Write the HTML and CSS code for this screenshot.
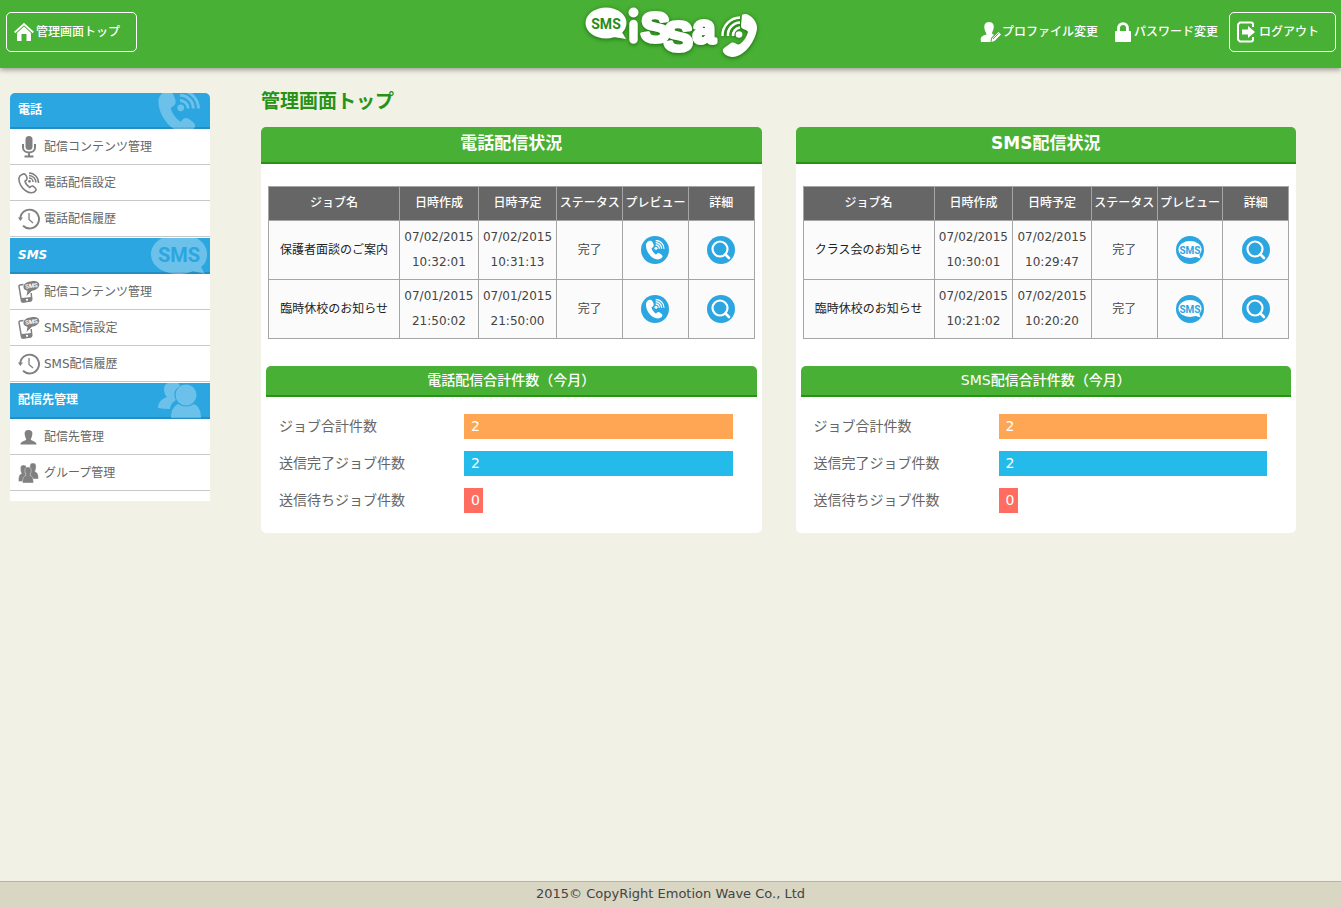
FILE: index.html
```html
<!DOCTYPE html>
<html lang="ja">
<head>
<meta charset="utf-8">
<title>管理画面トップ</title>
<link rel="stylesheet" href="styles.css">
</head>
<body>
<svg class="sprite" aria-hidden="true">
  <symbol id="handset" viewBox="0 0 30 30">
    <path fill="currentColor" d="M6 1.500C9.500 0 12 3 13 7.500C13.500 10.500 11.500 11.500 9.800 12.500C10.500 16.500 13 19.500 16.500 22C18 20 19.500 18.800 21.500 19.800C24 21.500 27.500 23.500 25.800 26C23 30 17 30 12 27C5 22 1 14 1.500 7C2 4.500 3.500 2.500 6 1.500Z"/>
    <circle cx="16.500" cy="12.500" r="2.300" fill="currentColor"/>
    <path fill="none" stroke="currentColor" stroke-width="2" d="M16 7.500A5.500 5.500 0 0 1 21.500 13M16 4A9 9 0 0 1 25 13M16 .800A12.400 12.400 0 0 1 28.500 13"/>
  </symbol>
  <symbol id="handset-line" viewBox="0 0 22 22">
    <path fill="none" stroke="currentColor" stroke-width="1.600" d="M4.500 2.200C7 1 8.500 3.500 9 6C9.300 7.800 8 8.500 7 9.200C7.500 12 9.500 14 11.800 15.500C12.800 14.300 14 13.500 15.300 14.300C17 15.500 19 16.700 17.800 18.500C15.800 21.500 11.500 21.300 8 19C3.500 16 .500 10.500 1 5.800C1.300 4 2.800 2.900 4.500 2.200Z"/>
    <circle cx="11.500" cy="9.300" r="1.400" fill="currentColor"/>
    <path fill="none" stroke="currentColor" stroke-width="1.500" d="M11 6A4 4 0 0 1 15 10M11 3.400A7 7 0 0 1 17.800 10.500M11 .900A9.700 9.700 0 0 1 20.500 11"/>
  </symbol>
  <symbol id="mic" viewBox="0 0 22 22">
    <rect x="7.500" y="0" width="7" height="14" rx="3.500" fill="currentColor"/>
    <path fill="none" stroke="currentColor" stroke-width="2" d="M5 8V11.500C5 18 17 18 17 11.500V8M11 16V20M6.500 20.500H15.500"/>
  </symbol>
  <symbol id="history" viewBox="0 0 22 22">
    <path fill="none" stroke="currentColor" stroke-width="1.900" d="M2.200 11A9.400 9.400 0 1 1 5 17.800"/>
    <path fill="currentColor" d="M0 9.500H5L2.300 13Z"/>
    <path fill="none" stroke="currentColor" stroke-width="1.300" d="M11 5V11.500L15 15"/>
  </symbol>
  <symbol id="mobile" viewBox="0 0 22 22">
    <path fill="none" stroke="currentColor" stroke-width="1.500" d="M5.500 3.500L2 4Q.800 4.300 1 5.500L3.500 20Q4 21.300 5 21L12.500 20Q14 19.500 13.700 18L13.200 12"/>
    <path fill="currentColor" d="M3.500 17L13.500 16L14 20L4.500 21.700Z"/>
    <path fill="currentColor" d="M13.500 .200C18 -.500 21.500 1 21.300 4C21 7.500 17 9.500 14 9.800L8.500 15L9.500 9.800C7 9.500 5.200 8 5.500 5.500C6 2 9.500 .600 13.500 .200Z"/>
    <circle cx="9" cy="18.800" r="1.100" fill="#fff"/>
  </symbol>
  <symbol id="person" viewBox="0 0 22 22">
    <path fill="currentColor" d="M10.500 4C13.500 4 14.800 5.500 14.300 8.500C14 11 13 12 12.800 13.500C13.500 15 18 15 18.500 18V18.500H2.500V18C3 15 7.500 15 8.300 13.500C8 12 7 11 6.700 8.500C6.300 5.500 7.500 4 10.500 4Z"/>
  </symbol>
  <symbol id="group" viewBox="0 0 22 22">
    <g fill="currentColor" stroke="#fff" stroke-width=".4">
      <path d="M15 1C17.800 1 18.500 3 18 6C18 8 17 8.500 17 9.500C19 10.500 20.500 11 20.500 17H11V10C13 9.500 12.500 8.500 12 6C11.500 3 12.200 1 15 1Z"/>
      <path d="M5.500 3C8.200 3 9 5 8.500 8C8 10 7.500 10.500 7.500 11.500C9 12.500 9 14 9 19.500H.500C.500 14.500 1 12.500 3.500 11.500C3 10.500 2.800 10 2.500 8C2 5 2.800 3 5.500 3Z"/>
      <path d="M10 5C12.800 5 13.500 7 13 10C12.800 11.500 12 12.500 12 13.500C14.500 14.500 15.500 16 15.500 21H4.500C4.500 16 5.500 14.500 8 13.500C7.800 12.500 7.300 11.500 7 10C6.500 7 7.200 5 10 5Z"/>
    </g>
  </symbol>
  <symbol id="sms-badge" viewBox="0 0 28 28">
    <circle cx="14" cy="14" r="14" fill="#2ca6e0"/>
    <ellipse cx="14" cy="13.500" rx="11.500" ry="8.500" fill="#fff"/>
    <path fill="#fff" d="M17 20L24.500 22.500L22.500 16Z"/>
  </symbol>
  <symbol id="call-badge" viewBox="0 0 28 28">
    <circle cx="14" cy="14" r="14" fill="#2ca6e0"/>
    <svg x="4" y="4" width="20" height="20" color="#fff"><use href="#handset"/></svg>
  </symbol>
  <symbol id="search-badge" viewBox="0 0 28 28">
    <circle cx="14" cy="14" r="14" fill="#2ca6e0"/>
    <circle cx="13" cy="13" r="7.500" fill="none" stroke="#fff" stroke-width="2.200"/>
    <path stroke="#fff" stroke-width="2.600" stroke-linecap="round" d="M18.500 18.500L22 22"/>
  </symbol>
</svg>

<header class="site-header">
  <a class="outline-link home-link" href="#">
    <svg width="20" height="18" viewBox="0 0 20 18"><path fill="#fff" d="M10 3.500L17 10V18H12.500V11H7.500V18H3V10Z"/><path fill="none" stroke="#fff" stroke-width="1.800" d="M.700 9.500L10 1L19.300 9.500"/></svg>
    <span>管理画面トップ</span>
  </a>
  <a class="logo" href="#" aria-label="SMS issa">
    <svg width="182" height="62" viewBox="0 0 182 62">
      <g class="logo-shadow">
        <ellipse cx="26" cy="22" rx="20.500" ry="15.500" fill="#fff"/>
        <path fill="#fff" d="M27 35L46 38L39 26Z"/>
        <circle cx="53.500" cy="11.500" r="5" fill="#fff"/>
        <path stroke="#fff" stroke-width="8.500" stroke-linecap="round" d="M53.500 23V38.500"/>
        <text class="logo-word"><tspan x="61" y="41">S</tspan><tspan x="84" y="50">S</tspan><tspan class="logo-a" x="113" y="42">a</tspan></text>
        <path fill="#fff" d="M162 14C168 10 178 20 177 28C175 42 163 56 153 56C147 56 140 51 144 47L151 42C155 40 157 45 160 43C164 40 167 35 168 31C167 28 160 29 161 24Z"/>
        <circle cx="159" cy="33.500" r="3.300" fill="#fff"/>
        <path fill="none" stroke="#fff" stroke-width="2.500" d="M153 35A8 8 0 0 1 160 26.500M148 35A12.500 12.500 0 0 1 160 21.500M142.500 35A18 18 0 0 1 160 16.500"/>
      </g>
      <text class="logo-sms" x="26" y="28">SMS</text>
    </svg>
  </a>
  <nav class="account-nav" aria-label="アカウント">
    <a class="plain-link" href="#">
      <svg width="22" height="22" viewBox="0 0 22 22"><path fill="#fff" d="M9 1C13 1 14.500 4 13.500 8C13 10 12 11 12 12.500L14 14L11 17L10.500 21H1C0 16 1.500 15 6.500 13.500C6.500 12 5 10.500 4.500 8C3.800 4 5 1 9 1Z"/><path fill="#fff" d="M12 17.500L18.500 11L21 13.500L14.500 20L11.500 21Z"/><path stroke="#48b034" d="M13 18L18.500 12.500"/></svg>
      <span>プロファイル変更</span>
    </a>
    <a class="plain-link lock-link" href="#">
      <svg width="18" height="20" viewBox="0 0 18 20"><rect x="1" y="9" width="16" height="11" rx="1" fill="#fff"/><path fill="none" stroke="#fff" stroke-width="2.800" d="M4.500 10V6.500C4.500 0 13.500 0 13.500 6.500V10"/></svg>
      <span>パスワード変更</span>
    </a>
    <a class="outline-link logout-link" href="#">
      <svg width="20" height="22" viewBox="0 0 20 22"><path fill="none" stroke="#fff" stroke-width="2" d="M17 6V3.500Q17 1.500 15 1.500H4L2 3.500V18.500L4 20.500H15Q17 20.500 17 18.500V16"/><path fill="#fff" d="M6 8.500H12V5L19 11L12 17V13.500H6Z"/></svg>
      <span>ログアウト</span>
    </a>
  </nav>
</header>

<div class="layout">
  <nav class="sidebar" aria-label="メニュー">
    <section class="menu">
      <h2 class="menu-title">電話<svg class="deco deco-phone" width="45" height="37" viewBox="0 2.500 30 25"><use href="#handset" width="30" height="30"/></svg></h2>
      <ul>
        <li><a href="#"><svg><use href="#mic"/></svg>配信コンテンツ管理</a></li>
        <li><a href="#"><svg><use href="#handset-line"/></svg>電話配信設定</a></li>
        <li><a href="#"><svg><use href="#history"/></svg>電話配信履歴</a></li>
      </ul>
    </section>
    <section class="menu">
      <h2 class="menu-title"><em>SMS</em><svg class="deco deco-sms" width="58" height="36" viewBox="0 0 58 36"><path fill="currentColor" d="M28 -4C45 -4 56 5 56 16C56 22 54 26 50 29L54 36L42 33C36 36 30 36 28 36C12 36 0 28 0 16C0 5 12 -4 28 -4Z"/><text x="28" y="24" class="deco-text">SMS</text></svg></h2>
      <ul>
        <li><a href="#"><svg viewBox="0 0 22 22"><use href="#mobile"/><text x="13.500" y="7" class="tiny-sms" transform="rotate(-8 13.500 5)">SMS</text></svg>配信コンテンツ管理</a></li>
        <li><a href="#"><svg viewBox="0 0 22 22"><use href="#mobile"/><text x="13.500" y="7" class="tiny-sms" transform="rotate(-8 13.500 5)">SMS</text></svg>SMS配信設定</a></li>
        <li><a href="#"><svg><use href="#history"/></svg>SMS配信履歴</a></li>
      </ul>
    </section>
    <section class="menu">
      <h2 class="menu-title">配信先管理<svg class="deco" width="46" height="36" viewBox="0 0 46 36"><g fill="currentColor"><path d="M7 6C7 -3 22 -3 23 3C17 6 16 12 19 17C15 20 14 21 13 26Q6 26 1 25C1 19 5 16 10 14Q7 11 7 6Z"/><circle cx="29" cy="12" r="10.500"/><path d="M14 35C14 27 17 23 21 21Q29 26 37 21C42 23 44 28 44 35Z"/></g></svg></h2>
      <ul>
        <li><a href="#"><svg><use href="#person"/></svg>配信先管理</a></li>
        <li><a href="#"><svg><use href="#group"/></svg>グループ管理</a></li>
      </ul>
    </section>
  </nav>

  <main class="content">
    <h1>管理画面トップ</h1>
    <div class="panels">
      <section class="panel">
        <h2 class="panel-title">電話配信状況</h2>
        <table class="jobs">
          <colgroup><col class="c-name"><col class="c-date"><col class="c-date"><col class="c-small"><col class="c-small"><col class="c-small"></colgroup>
          <thead><tr><th scope="col">ジョブ名</th><th scope="col">日時作成</th><th scope="col">日時予定</th><th scope="col">ステータス</th><th scope="col">プレビュー</th><th scope="col">詳細</th></tr></thead>
          <tbody>
            <tr><td class="name">保護者面談のご案内</td><td>07/02/2015<br>10:32:01</td><td>07/02/2015<br>10:31:13</td><td>完了</td>
              <td><a class="badge" href="#" aria-label="プレビュー"><svg><use href="#call-badge"/></svg></a></td><td><a class="badge" href="#" aria-label="詳細"><svg><use href="#search-badge"/></svg></a></td></tr>
            <tr><td class="name">臨時休校のお知らせ</td><td>07/01/2015<br>21:50:02</td><td>07/01/2015<br>21:50:00</td><td>完了</td>
              <td><a class="badge" href="#" aria-label="プレビュー"><svg><use href="#call-badge"/></svg></a></td><td><a class="badge" href="#" aria-label="詳細"><svg><use href="#search-badge"/></svg></a></td></tr>
          </tbody>
        </table>
        <h3 class="totals-title">電話配信合計件数（今月）</h3>
        <dl class="totals">
          <dt>ジョブ合計件数</dt><dd><span class="bar bar-all" style="width:100%">2</span></dd>
          <dt>送信完了ジョブ件数</dt><dd><span class="bar bar-done" style="width:100%">2</span></dd>
          <dt>送信待ちジョブ件数</dt><dd><span class="bar bar-wait" style="width:0%">0</span></dd>
        </dl>
      </section>
      <section class="panel">
        <h2 class="panel-title">SMS配信状況</h2>
        <table class="jobs">
          <colgroup><col class="c-name"><col class="c-date"><col class="c-date"><col class="c-small"><col class="c-small"><col class="c-small"></colgroup>
          <thead><tr><th scope="col">ジョブ名</th><th scope="col">日時作成</th><th scope="col">日時予定</th><th scope="col">ステータス</th><th scope="col">プレビュー</th><th scope="col">詳細</th></tr></thead>
          <tbody>
            <tr><td class="name">クラス会のお知らせ</td><td>07/02/2015<br>10:30:01</td><td>07/02/2015<br>10:29:47</td><td>完了</td>
              <td><a class="badge" href="#" aria-label="プレビュー"><svg viewBox="0 0 28 28"><use href="#sms-badge"/><text x="14" y="18" class="badge-sms">SMS</text></svg></a></td><td><a class="badge" href="#" aria-label="詳細"><svg><use href="#search-badge"/></svg></a></td></tr>
            <tr><td class="name">臨時休校のお知らせ</td><td>07/02/2015<br>10:21:02</td><td>07/02/2015<br>10:20:20</td><td>完了</td>
              <td><a class="badge" href="#" aria-label="プレビュー"><svg viewBox="0 0 28 28"><use href="#sms-badge"/><text x="14" y="18" class="badge-sms">SMS</text></svg></a></td><td><a class="badge" href="#" aria-label="詳細"><svg><use href="#search-badge"/></svg></a></td></tr>
          </tbody>
        </table>
        <h3 class="totals-title">SMS配信合計件数（今月）</h3>
        <dl class="totals">
          <dt>ジョブ合計件数</dt><dd><span class="bar bar-all" style="width:100%">2</span></dd>
          <dt>送信完了ジョブ件数</dt><dd><span class="bar bar-done" style="width:100%">2</span></dd>
          <dt>送信待ちジョブ件数</dt><dd><span class="bar bar-wait" style="width:0%">0</span></dd>
        </dl>
      </section>
    </div>
  </main>
</div>

<footer class="site-footer">2015© CopyRight Emotion Wave Co., Ltd</footer>
</body>
</html>
```

FILE: styles.css
```css
* { box-sizing: border-box; }

body {
  margin: 0;
  min-height: 100vh;
  display: flex;
  flex-direction: column;
  background: #f1f1e5;
  color: #444;
  font-family: "DejaVu Sans", "Noto Sans CJK JP", sans-serif;
  font-size: 12px;
  line-height: 24px;
}

h1, h2, h3, ul, dl, dd { margin: 0; padding: 0; }
ul { list-style: none; }
a { color: inherit; text-decoration: none; }
svg { display: block; flex: none; }
.sprite { position: absolute; width: 0; height: 0; }

/* Header */
.site-header {
  display: grid;
  grid-template-columns: 1fr auto 1fr;
  align-items: center;
  padding: 0 5px 4px 6px;
  height: 68px;
  background: #48b034;
  box-shadow: 0 2px 5px rgba(0, 0, 0, .35);
  color: #fff;
  font-weight: 500;
}
.site-header a { display: flex; align-items: center; white-space: nowrap; }
.outline-link { height: 40px; border: 1px solid #fff; border-radius: 5px; }
.home-link { justify-self: start; padding: 0 16px 0 7px; gap: 2px; }
.logout-link { padding: 0 16px 0 6px; gap: 3px; }
.account-nav { display: flex; justify-self: end; align-items: center; }
.lock-link { margin: 0 11px 0 16px; gap: 2px; }

.logo-shadow { filter: drop-shadow(0 1px 2px #176d0b); }
.logo-word {
  fill: #fff;
  stroke: #fff;
  stroke-width: 4px;
  stroke-linejoin: round;
  font-family: "Liberation Sans", Arial, sans-serif;
  font-size: 43px;
  font-weight: bold;
}
.logo-a { font-size: 40px; }
.logo-sms, .deco-text, .badge-sms, .tiny-sms {
  font-family: "Liberation Sans Narrow", "DejaVu Sans Condensed", Roboto, sans-serif;
  font-weight: bold;
  text-anchor: middle;
}
.logo-sms {
  font-family: Roboto, sans-serif;
  font-size: 14px;
  fill: #278b17;
}

/* Sidebar */
.layout { display: flex; flex: 1; align-items: flex-start; }
.sidebar {
  flex: none;
  width: 200px;
  margin: 25px 0 0 10px;
  padding-bottom: 10px;
  background: #fff;
  border-radius: 5px 5px 0 0;
}
.menu + .menu { margin-top: 1px; }
.menu-title {
  position: relative;
  height: 36px;
  padding-left: 8px;
  overflow: hidden;
  background: #2ca6e0;
  box-shadow: inset 0 -2px #218fc3;
  color: #fff;
  font-size: 12px;
  line-height: 34px;
}
.menu:first-child .menu-title { border-radius: 5px 5px 0 0; }
.deco { position: absolute; top: 0; right: 7px; color: rgba(255, 255, 255, .3); }
.deco-phone { right: 9px; }
.deco-sms { right: 1px; }
.deco-text { font-family: Roboto, sans-serif; font-size: 20px; fill: #2ca6e0; }
.menu li { border-bottom: 1px solid #c8c8c8; }
.menu li a {
  display: flex;
  align-items: center;
  gap: 4px;
  height: 35px;
  padding-left: 8px;
  color: #666;
}
.menu li svg { width: 22px; height: 22px; color: #808080; }
.tiny-sms { font-family: Roboto, sans-serif; font-size: 6px; fill: #fff; }

/* Content */
.content { flex: 1; min-width: 0; padding: 22px 45px 40px 51px; }
h1 {
  margin-bottom: 15px;
  color: #279315;
  font-size: 19px;
  line-height: 22px;
}
.panels { display: grid; grid-template-columns: 1fr 1fr; gap: 34px; }
.panel { padding-bottom: 20px; background: #fff; border-radius: 5px; }
.panel-title {
  padding-bottom: 3px;
  background: #48b034;
  border-bottom: 2px solid #279315;
  border-radius: 5px 5px 0 0;
  color: #fff;
  font-size: 17px;
  line-height: 32px;
  text-align: center;
}

.jobs {
  width: calc(100% - 14px);
  margin: 22px 7px 0;
  border-collapse: collapse;
  table-layout: fixed;
  text-align: center;
}
.c-name { width: 27%; }
.c-date { width: 16.2%; }
.jobs th, .jobs td { border: 1px solid #a5a5a5; white-space: nowrap; }
.jobs th {
  padding: 4px 0 5px;
  background: #666;
  color: #fff;
  font-weight: 500;
}
.jobs td { padding: 4px 0; background: #fbfbfb; line-height: 25px; }
.jobs .name { color: #222; }
.badge { display: inline-block; vertical-align: middle; }
.badge svg { width: 28px; height: 28px; }
.badge-sms { font-family: Roboto, sans-serif; font-size: 10px; fill: #2ca6e0; }

.totals-title {
  margin: 27px 5px 17px;
  background: #48b034;
  border-bottom: 2px solid #279315;
  border-radius: 5px 5px 0 0;
  color: #fff;
  font-size: 14px;
  font-weight: 500;
  line-height: 29px;
  text-align: center;
}
.totals {
  display: grid;
  grid-template-columns: 185px 1fr;
  row-gap: 12px;
  margin: 0 29px 0 18px;
  color: #666;
  font-size: 14px;
  line-height: 25px;
}
.bar { display: block; min-width: 19px; padding-left: 7px; color: #fff; }
.bar-all { background: #ffa654; }
.bar-done { background: #24bbea; }
.bar-wait { background: #ff6d60; }

/* Footer */
.site-footer {
  height: 27px;
  background: #d9d6c3;
  border-top: 1px solid #b5b5a0;
  font-size: 13px;
  line-height: 24px;
  text-align: center;
}
```
